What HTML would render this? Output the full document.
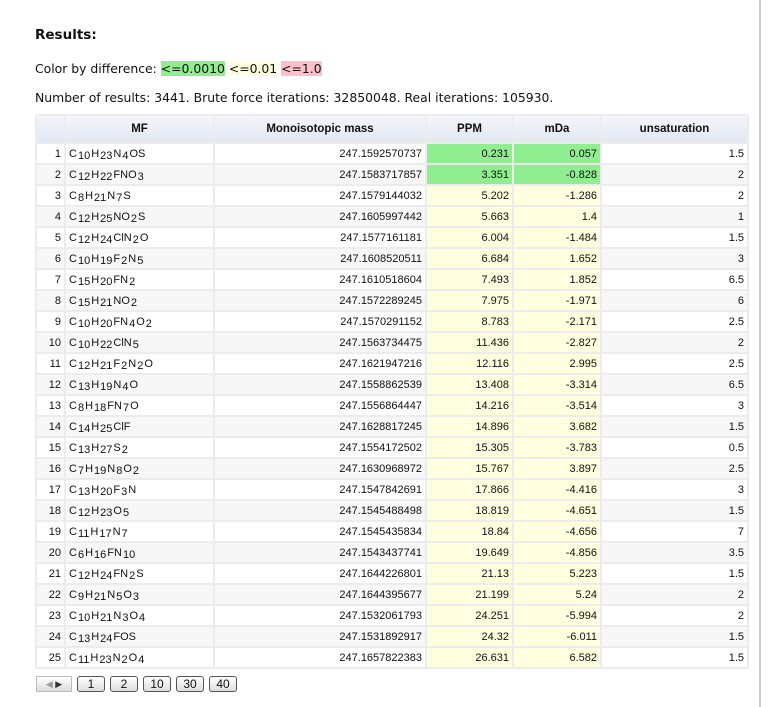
<!DOCTYPE html>
<html><head><meta charset="utf-8"><style>
html,body{margin:0;padding:0;background:#fff;width:778px;height:707px;overflow:hidden}
body{font-family:"DejaVu Sans","Liberation Sans",sans-serif;color:#111;position:relative}
.vl{position:absolute;left:759px;top:0;width:2px;height:707px;background:#d0d0d0}
h3{position:absolute;left:35px;top:27px;margin:0;font-size:13.5px;font-weight:bold}
.p1{position:absolute;left:35px;top:61px;font-size:12.4px;white-space:nowrap}
.p2{position:absolute;left:35px;top:90px;font-size:12.4px;white-space:nowrap}
.g{background:#90ee90}.y{background:#ffffe0}.r{background:#ffc0cb}
table{position:absolute;left:35px;top:114px;border-collapse:separate;border-spacing:2px;background:#ececec;font-family:"Liberation Sans",sans-serif;font-size:11px;table-layout:fixed;width:714px;margin:0}
th{height:26px;font-weight:bold;background:linear-gradient(#f4f6fa,#e2e8f2);font-size:11.5px;padding:0}
td{height:19px;padding:0 3px;text-align:right;white-space:nowrap;overflow:hidden}
tr.o td{background:#fff}tr.e td{background:#f7f7f7}
td.mf{text-align:left}
tr td.g{background:#90ee90}tr td.y{background:#ffffe0}
td.mf b{font-weight:normal;position:relative;top:2px;font-size:11px;margin:0 1px}
.pg{position:absolute;left:36px;top:676px;display:flex;gap:5px;font-family:"Liberation Sans",sans-serif;font-size:12px}
.pg span{display:inline-block;height:14px;line-height:14px;border:1px solid #555;border-radius:3px;background:linear-gradient(#fff,#ddd);text-align:center}
.ar{width:34px;border:1px solid #bbb!important;border-radius:1px!important;font-size:9px;color:#999}
</style></head><body>
<div class="vl"></div>
<h3>Results:</h3>
<div class="p1">Color by difference: <span class="g">&lt;=0.0010</span> <span class="y">&lt;=0.01</span> <span class="r">&lt;=1.0</span></div>
<div class="p2">Number of results: 3441. Brute force iterations: 32850048. Real iterations: 105930.</div>
<table>
<colgroup><col style="width:27px"><col style="width:147px"><col style="width:210px"><col style="width:85px"><col style="width:86px"><col style="width:145px"></colgroup>
<tr><th></th><th>MF</th><th>Monoisotopic mass</th><th>PPM</th><th>mDa</th><th>unsaturation</th></tr>
<tr class="o"><td>1</td><td class="mf">C<b>10</b>H<b>23</b>N<b>4</b>OS</td><td>247.1592570737</td><td class="g">0.231</td><td class="g">0.057</td><td>1.5</td></tr>
<tr class="e"><td>2</td><td class="mf">C<b>12</b>H<b>22</b>FNO<b>3</b></td><td>247.1583717857</td><td class="g">3.351</td><td class="g">-0.828</td><td>2</td></tr>
<tr class="o"><td>3</td><td class="mf">C<b>8</b>H<b>21</b>N<b>7</b>S</td><td>247.1579144032</td><td class="y">5.202</td><td class="y">-1.286</td><td>2</td></tr>
<tr class="e"><td>4</td><td class="mf">C<b>12</b>H<b>25</b>NO<b>2</b>S</td><td>247.1605997442</td><td class="y">5.663</td><td class="y">1.4</td><td>1</td></tr>
<tr class="o"><td>5</td><td class="mf">C<b>12</b>H<b>24</b>ClN<b>2</b>O</td><td>247.1577161181</td><td class="y">6.004</td><td class="y">-1.484</td><td>1.5</td></tr>
<tr class="e"><td>6</td><td class="mf">C<b>10</b>H<b>19</b>F<b>2</b>N<b>5</b></td><td>247.1608520511</td><td class="y">6.684</td><td class="y">1.652</td><td>3</td></tr>
<tr class="o"><td>7</td><td class="mf">C<b>15</b>H<b>20</b>FN<b>2</b></td><td>247.1610518604</td><td class="y">7.493</td><td class="y">1.852</td><td>6.5</td></tr>
<tr class="e"><td>8</td><td class="mf">C<b>15</b>H<b>21</b>NO<b>2</b></td><td>247.1572289245</td><td class="y">7.975</td><td class="y">-1.971</td><td>6</td></tr>
<tr class="o"><td>9</td><td class="mf">C<b>10</b>H<b>20</b>FN<b>4</b>O<b>2</b></td><td>247.1570291152</td><td class="y">8.783</td><td class="y">-2.171</td><td>2.5</td></tr>
<tr class="e"><td>10</td><td class="mf">C<b>10</b>H<b>22</b>ClN<b>5</b></td><td>247.1563734475</td><td class="y">11.436</td><td class="y">-2.827</td><td>2</td></tr>
<tr class="o"><td>11</td><td class="mf">C<b>12</b>H<b>21</b>F<b>2</b>N<b>2</b>O</td><td>247.1621947216</td><td class="y">12.116</td><td class="y">2.995</td><td>2.5</td></tr>
<tr class="e"><td>12</td><td class="mf">C<b>13</b>H<b>19</b>N<b>4</b>O</td><td>247.1558862539</td><td class="y">13.408</td><td class="y">-3.314</td><td>6.5</td></tr>
<tr class="o"><td>13</td><td class="mf">C<b>8</b>H<b>18</b>FN<b>7</b>O</td><td>247.1556864447</td><td class="y">14.216</td><td class="y">-3.514</td><td>3</td></tr>
<tr class="e"><td>14</td><td class="mf">C<b>14</b>H<b>25</b>ClF</td><td>247.1628817245</td><td class="y">14.896</td><td class="y">3.682</td><td>1.5</td></tr>
<tr class="o"><td>15</td><td class="mf">C<b>13</b>H<b>27</b>S<b>2</b></td><td>247.1554172502</td><td class="y">15.305</td><td class="y">-3.783</td><td>0.5</td></tr>
<tr class="e"><td>16</td><td class="mf">C<b>7</b>H<b>19</b>N<b>8</b>O<b>2</b></td><td>247.1630968972</td><td class="y">15.767</td><td class="y">3.897</td><td>2.5</td></tr>
<tr class="o"><td>17</td><td class="mf">C<b>13</b>H<b>20</b>F<b>3</b>N</td><td>247.1547842691</td><td class="y">17.866</td><td class="y">-4.416</td><td>3</td></tr>
<tr class="e"><td>18</td><td class="mf">C<b>12</b>H<b>23</b>O<b>5</b></td><td>247.1545488498</td><td class="y">18.819</td><td class="y">-4.651</td><td>1.5</td></tr>
<tr class="o"><td>19</td><td class="mf">C<b>11</b>H<b>17</b>N<b>7</b></td><td>247.1545435834</td><td class="y">18.84</td><td class="y">-4.656</td><td>7</td></tr>
<tr class="e"><td>20</td><td class="mf">C<b>6</b>H<b>16</b>FN<b>10</b></td><td>247.1543437741</td><td class="y">19.649</td><td class="y">-4.856</td><td>3.5</td></tr>
<tr class="o"><td>21</td><td class="mf">C<b>12</b>H<b>24</b>FN<b>2</b>S</td><td>247.1644226801</td><td class="y">21.13</td><td class="y">5.223</td><td>1.5</td></tr>
<tr class="e"><td>22</td><td class="mf">C<b>9</b>H<b>21</b>N<b>5</b>O<b>3</b></td><td>247.1644395677</td><td class="y">21.199</td><td class="y">5.24</td><td>2</td></tr>
<tr class="o"><td>23</td><td class="mf">C<b>10</b>H<b>21</b>N<b>3</b>O<b>4</b></td><td>247.1532061793</td><td class="y">24.251</td><td class="y">-5.994</td><td>2</td></tr>
<tr class="e"><td>24</td><td class="mf">C<b>13</b>H<b>24</b>FOS</td><td>247.1531892917</td><td class="y">24.32</td><td class="y">-6.011</td><td>1.5</td></tr>
<tr class="o"><td>25</td><td class="mf">C<b>11</b>H<b>23</b>N<b>2</b>O<b>4</b></td><td>247.1657822383</td><td class="y">26.631</td><td class="y">6.582</td><td>1.5</td></tr>
</table>
<div class="pg"><span class="ar">◀ <span style="border:none;background:none;color:#333">▶</span></span><span style="width:26px">1</span><span style="width:26px">2</span><span style="width:26px">10</span><span style="width:26px">30</span><span style="width:26px">40</span></div>
</body></html>
